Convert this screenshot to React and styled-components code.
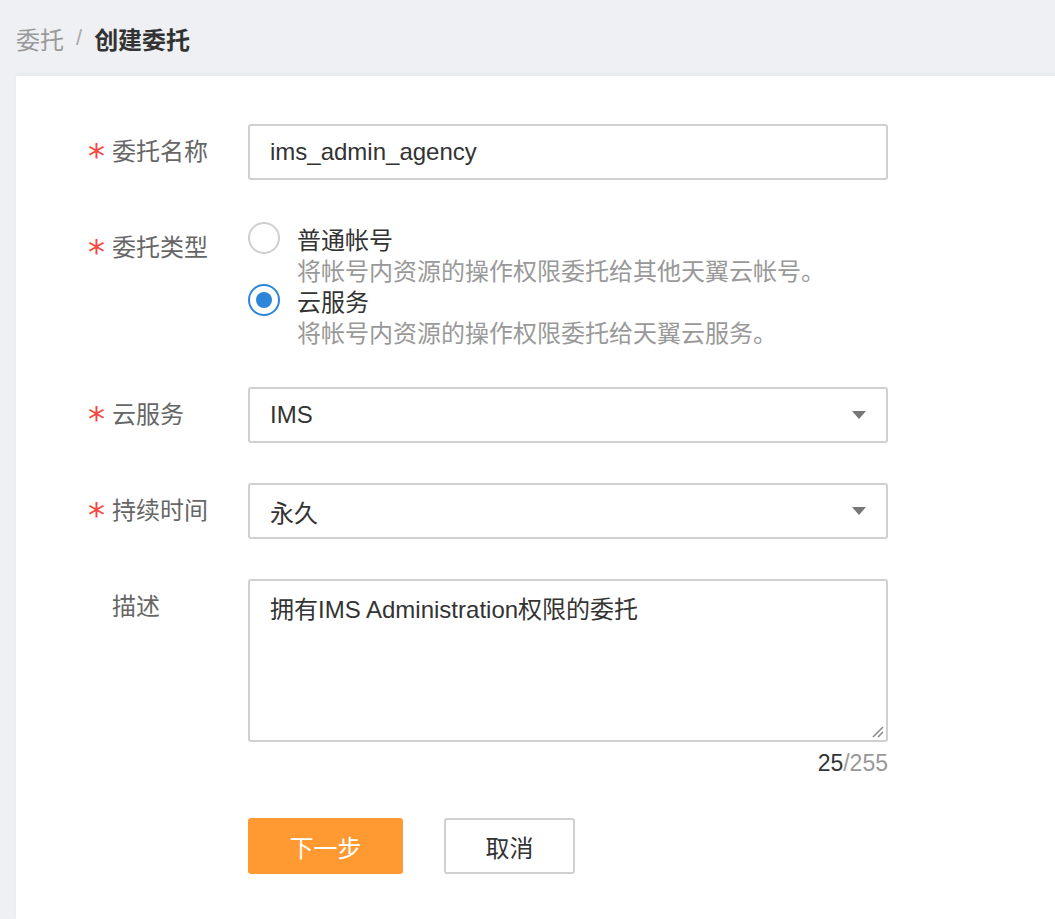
import React from "react";
import styled, { createGlobalStyle } from "styled-components";

const Global = createGlobalStyle`
  html, body { margin: 0; padding: 0; background: #eef0f4; }
  body { font-family: "Liberation Sans", "Noto Sans CJK SC", sans-serif; font-size: 24px; color: #333; }
  * { box-sizing: border-box; }
`;

const Page = styled.div`
  min-height: 919px;
  display: flex;
  flex-direction: column;
`;

const Breadcrumb = styled.div`
  height: 76px;
  display: flex;
  align-items: center;
  padding-left: 16px;
  font-size: 24px;
`;

const Crumb = styled.span`
  color: #999;
`;

const Sep = styled.span`
  color: #aaa;
  margin: 0 12px;
  font-size: 22px;
`;

const Current = styled.span`
  color: #333;
  font-weight: bold;
`;

const Card = styled.div`
  flex: 1;
  margin-left: 16px;
  background: #fff;
  box-shadow: 0 -2px 4px rgba(0, 0, 0, 0.04);
  padding: 48px 0 40px 0;
  display: flex;
  flex-direction: column;
  gap: 40px;
`;

const Row = styled.div`
  display: flex;
  align-items: flex-start;
`;

const Label = styled.div`
  width: 232px;
  flex-shrink: 0;
  padding-left: 72px;
  line-height: 56px;
  height: 56px;
  color: #666;
  display: flex;
  align-items: center;
`;

const Star = styled.span`
  width: 24px;
  color: #f5473e;
  font-family: "DejaVu Sans", sans-serif;
  font-size: 34px;
  line-height: 1;
  visibility: ${(p) => (p.$hidden ? "hidden" : "visible")};
  transform: translateY(4px);
`;

const Field = styled.div`
  width: 640px;
  display: flex;
  flex-direction: column;
`;

const Input = styled.div`
  height: 56px;
  border: 2px solid #d0d0d0;
  border-radius: 3px;
  padding: 0 20px;
  display: flex;
  align-items: center;
  color: #333;
  font-size: 24px;
`;

const Select = styled(Input)`
  justify-content: space-between;
  padding-right: 20px;
`;

const Caret = styled.span`
  width: 0;
  height: 0;
  border-left: 7px solid transparent;
  border-right: 7px solid transparent;
  border-top: 8px solid #777;
`;

const RadioGroup = styled.div`
  display: flex;
  flex-direction: column;
  padding-top: 3px;
  height: 127px;
`;

const Option = styled.div`
  display: grid;
  grid-template-columns: 32px 1fr;
  grid-template-rows: 30px 32px;
  column-gap: 17px;
  align-items: center;
`;

const Radio = styled.span`
  width: 32px;
  height: 32px;
  border-radius: 50%;
  border: 2px solid ${(p) => (p.$checked ? "#2e86d8" : "#cfcfcf")};
  display: flex;
  align-items: center;
  justify-content: center;
  &::after {
    content: "";
    width: 16px;
    height: 16px;
    border-radius: 50%;
    background: #2e86d8;
    display: ${(p) => (p.$checked ? "block" : "none")};
  }
`;

const OptionTitle = styled.span`
  display: flex;
  align-items: center;
  height: 30px;
  color: #333;
`;

const OptionDesc = styled.span`
  grid-column: 2;
  display: flex;
  align-items: center;
  height: 32px;
  color: #999;
`;

const TextArea = styled.div`
  position: relative;
  height: 163px;
  border: 2px solid #d0d0d0;
  border-radius: 3px;
  padding: 14px 20px;
  line-height: 30px;
  color: #333;
`;

const Grip = styled.svg`
  position: absolute;
  right: 2px;
  bottom: 2px;
`;

const Counter = styled.div`
  text-align: right;
  line-height: 30px;
  height: 30px;
  margin-top: 6px;
  color: #999;
  font-size: 23px;
`;

const Count = styled.span`
  color: #333;
`;

const Actions = styled.div`
  display: flex;
  gap: 41px;
`;

const Button = styled.button`
  height: 56px;
  width: ${(p) => p.$w}px;
  border-radius: 3px;
  font-family: inherit;
  font-size: 24px;
  cursor: pointer;
  border: ${(p) => (p.$primary ? "none" : "2px solid #d0d0d0")};
  background: ${(p) => (p.$primary ? "#ff9a33" : "#fff")};
  color: ${(p) => (p.$primary ? "#fff" : "#333")};
`;

const FieldRow = ({ label, required = true, children }) => (
  <Row>
    <Label>
      <Star $hidden={!required}>*</Star>
      {label}
    </Label>
    <Field>{children}</Field>
  </Row>
);

export default function App() {
  return (
    <Page>
      <Global />
      <Breadcrumb>
        <Crumb>委托</Crumb>
        <Sep>/</Sep>
        <Current>创建委托</Current>
      </Breadcrumb>
      <Card>
        <FieldRow label="委托名称">
          <Input>ims_admin_agency</Input>
        </FieldRow>
        <FieldRow label="委托类型">
          <RadioGroup>
            <Option>
              <Radio />
              <OptionTitle>普通帐号</OptionTitle>
              <OptionDesc>将帐号内资源的操作权限委托给其他天翼云帐号。</OptionDesc>
            </Option>
            <Option>
              <Radio $checked />
              <OptionTitle>云服务</OptionTitle>
              <OptionDesc>将帐号内资源的操作权限委托给天翼云服务。</OptionDesc>
            </Option>
          </RadioGroup>
        </FieldRow>
        <FieldRow label="云服务">
          <Select>
            IMS
            <Caret />
          </Select>
        </FieldRow>
        <FieldRow label="持续时间">
          <Select>
            永久
            <Caret />
          </Select>
        </FieldRow>
        <FieldRow label="描述" required={false}>
          <TextArea>
            拥有IMS Administration权限的委托
            <Grip width="14" height="14" viewBox="0 0 14 14">
              <path d="M13 3 L3 13 M13 8 L8 13" stroke="#888" strokeWidth="1.5" fill="none" />
            </Grip>
          </TextArea>
          <Counter>
            <Count>25</Count>/255
          </Counter>
        </FieldRow>
        <Row>
          <Label />
          <Actions>
            <Button $primary $w={155}>下一步</Button>
            <Button $w={131}>取消</Button>
          </Actions>
        </Row>
      </Card>
    </Page>
  );
}
